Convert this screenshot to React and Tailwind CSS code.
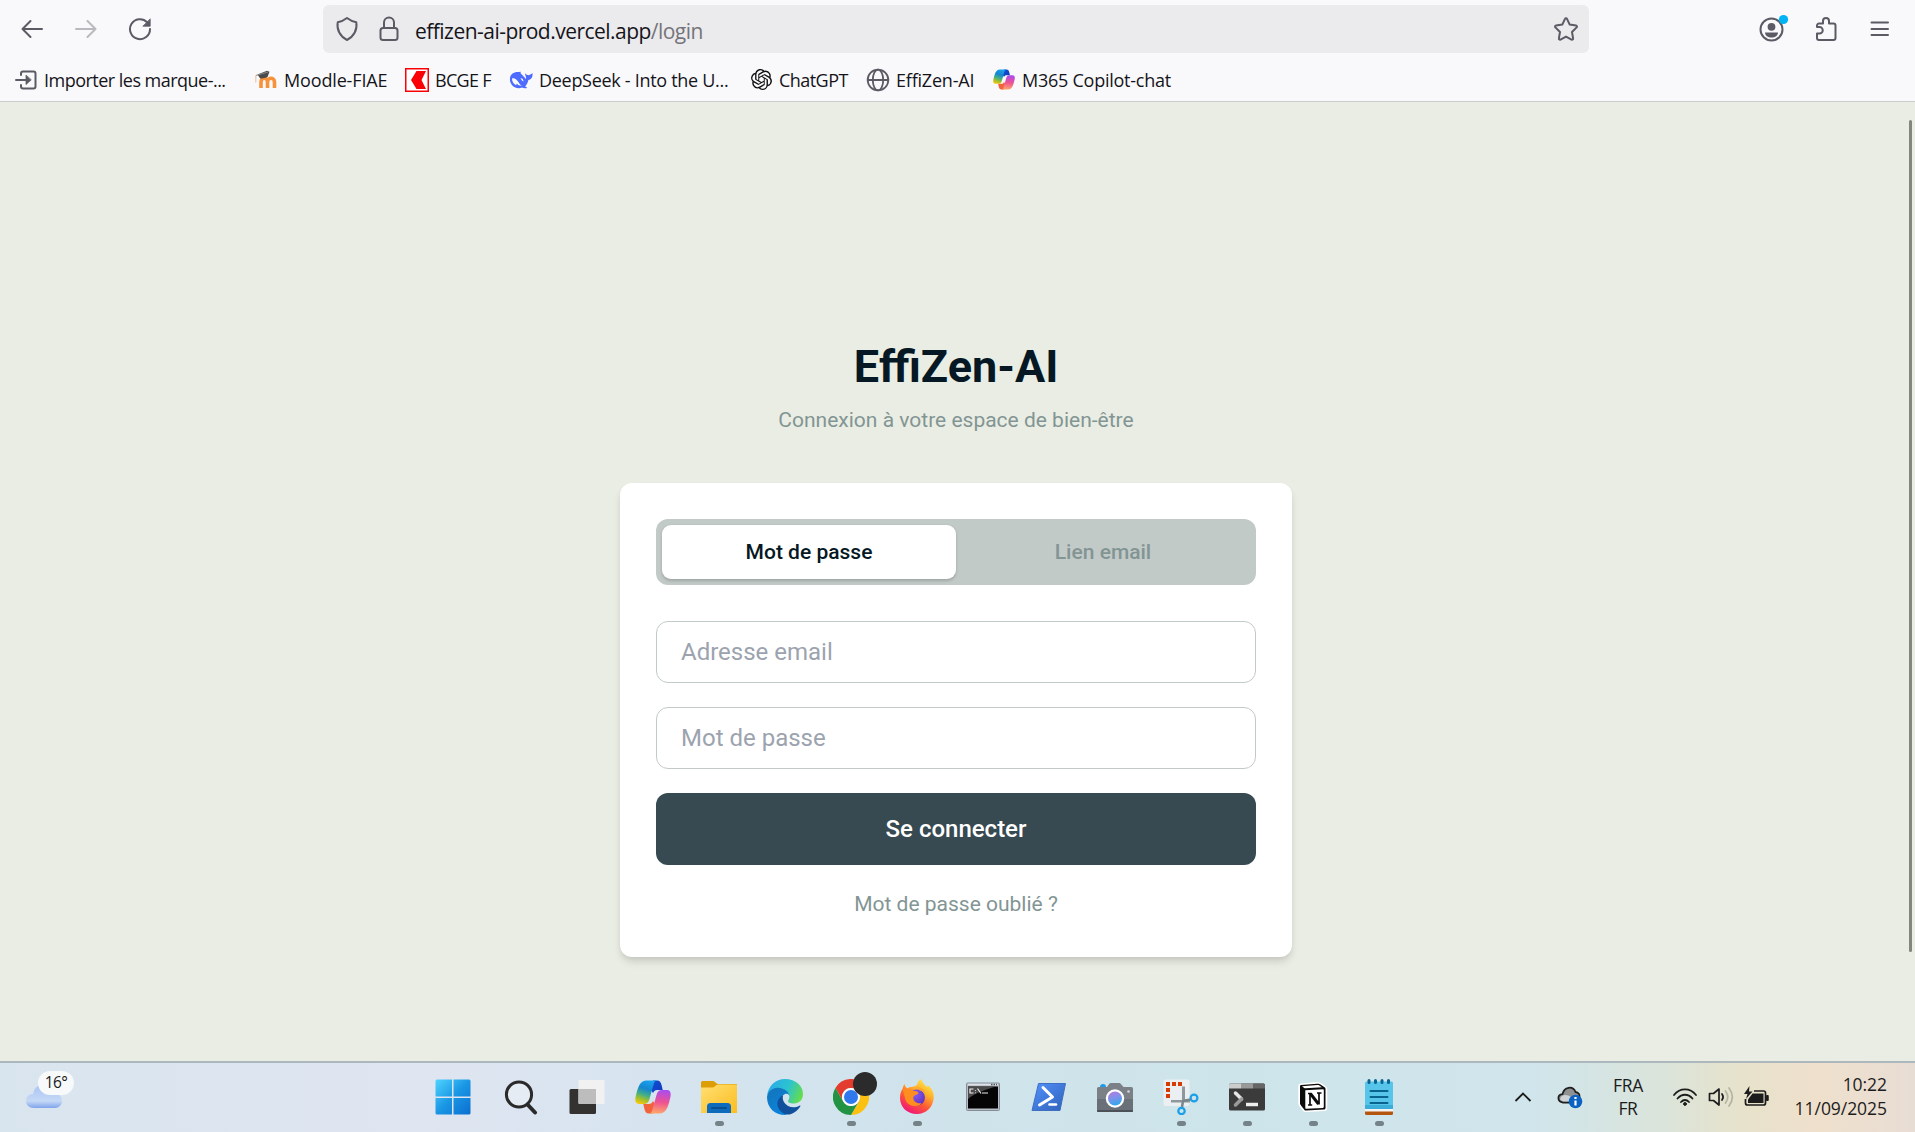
import React from 'react';
import { SiOpenai } from 'react-icons/si';

const stroke = { fill: 'none', stroke: '#5b5b66', strokeWidth: 2, strokeLinecap: 'round', strokeLinejoin: 'round' };

/* ---------- browser toolbar icons ---------- */

const ArrowLeft = ({ className }) => (
  <svg width="24" height="24" viewBox="0 0 24 24" className={className} {...stroke}>
    <path d="M22 12H2.5M10.5 4 2.5 12l8 8" />
  </svg>
);

const Reload = () => (
  <svg width="24" height="24" viewBox="0 0 24 24" {...stroke}>
    <path d="M19.2 5.2A10 10 0 1 0 22 12" />
    <path d="M22.2 2.2v7h-7z" fill="#5b5b66" strokeWidth="0.8" />
  </svg>
);

const Shield = () => (
  <svg width="24" height="26" viewBox="0 0 24 26" {...stroke}>
    <path d="M12 2c3 2.300 6.500 3.800 9.300 4.300C22.500 13.500 19 20.500 12 24 5 20.500 1.500 13.500 2.700 6.300 5.500 5.800 9 4.300 12 2z" />
  </svg>
);

const Lock = () => (
  <svg width="20" height="26" viewBox="0 0 20 26" {...stroke}>
    <rect x="1.500" y="12" width="17" height="12" rx="2.500" />
    <path d="M5 12V6.500a5 5 0 0 1 10 0V12" />
  </svg>
);

const Star = () => (
  <svg width="26" height="26" viewBox="0 0 26 26" {...stroke}>
    <path d="M12 2.800a1.100 1.100 0 0 1 2 0l2.700 5.800 6.300.9a1.100 1.100 0 0 1 .6 1.900L19 16l1.100 6.400a1.100 1.100 0 0 1-1.600 1.200L13 20.600l-5.500 3a1.100 1.100 0 0 1-1.600-1.200L7 16l-4.600-4.600A1.100 1.100 0 0 1 3 9.500l6.300-.9z" />
  </svg>
);

const Account = () => (
  <svg width="30" height="28" viewBox="0 0 30 28">
    <circle cx="12.500" cy="15.500" r="11" {...stroke} />
    <circle cx="12.500" cy="12.800" r="3.900" fill="#5b5b66" />
    <path d="M6 18.500h13c0 3-3 5-6.500 5S6 21.500 6 18.500z" fill="#5b5b66" />
    <circle cx="24.500" cy="5.500" r="4.600" fill="#00b3f4" />
  </svg>
);

const Puzzle = () => (
  <svg width="22" height="26" viewBox="0 0 22 26" {...stroke}>
    <path d="M2 10.500V9.500A2 2 0 0 1 4 7.500h4V5a3 3 0 0 1 6 0v2.500h4.500a2 2 0 0 1 2 2V22a2 2 0 0 1-2 2H4a2 2 0 0 1-2-2v-4.500h2.500a3 3 0 0 0 0-6.500H2z" />
  </svg>
);

const Menu = () => (
  <svg width="20" height="18" viewBox="0 0 20 18" {...stroke}>
    <path d="M1.500 2.500h16.500M1.500 9h16.500M1.500 15h16.500" />
  </svg>
);

/* ---------- bookmark icons ---------- */

const ImportIcon = () => (
  <svg width="24" height="22" viewBox="0 0 24 22" {...stroke}>
    <path d="M7 6V4.500a2 2 0 0 1 2-2h10.500a2 2 0 0 1 2 2v13a2 2 0 0 1-2 2H9a2 2 0 0 1-2-2V16M2 11h12" />
    <path d="M12 6.500v9l5-4.500z" fill="#5b5b66" strokeWidth="0.800" />
  </svg>
);

const Moodle = () => (
  <svg width="24" height="20" viewBox="0 0 24 20">
    <path d="M7 18v-6c0-5 6.500-5 6.500 0v6m0-6c0-5 7-5 7 0v6" fill="none" stroke="#f7923a" strokeWidth="3.600" />
    <path d="M3.500 4.500 13 .8l2.500 1-2 5.200c-2 1-5.500 1.800-7.500 1.200z" fill="#4a4a4a" />
    <path d="M1.800 5.500 14 2" stroke="#8a8a8a" strokeWidth="1" />
    <path d="M1.800 5.500v7" stroke="#f3c5a0" strokeWidth="1.200" />
  </svg>
);

const Bcge = () => (
  <svg width="24" height="24" viewBox="0 0 24 24">
    <rect x="0.750" y="0.750" width="22.500" height="22.500" fill="#fff" stroke="#fb0007" strokeWidth="1.500" />
    <path d="M11.500 3H21l-4.500 9 4.500 9h-9.500L6 12z" fill="#fb0007" />
  </svg>
);

const DeepSeek = () => (
  <svg width="24" height="18" viewBox="0 0 24 18">
    <path
      d="M1 7C1.500 3 5 .8 9 1c1 0 2-.6 2.500-.2.600.5-.3 1 .3 1.800 2 2 4 4 5 5.500 1-1.500-.8-3.500-.8-6 .8 1 1.300 1.700 2.600 2 1.700.2 3-.3 4.800-2 .7 4-1 6.300-4 7-.5 2.600-1.600 4.700-3.300 6.400 1 .4 1.700.7 1.900 1.500-2 .6-3.600.3-5-.4C6.500 18.800.2 14 1 7z"
      fill="#4d6bfe"
    />
    <path d="M3 7.500c2.500-.8 4.500.8 6 3 1.300 2 2 3.200 3.800 4.200-2 .3-3.600-.6-5-2.200l-.6 1.800C4.500 13 3 10.500 3 7.500z" fill="#f9f9fb" />
    <path d="M11.500 7.200c2-.3 3 1.300 3 3.200-1.300-.2-1.800-1.500-3-3.200z" fill="#f9f9fb" />
  </svg>
);

const Globe = () => (
  <svg width="24" height="24" viewBox="0 0 24 24" {...stroke} strokeWidth="1.800">
    <circle cx="12" cy="12" r="10.300" />
    <ellipse cx="12" cy="12" rx="5.200" ry="10.300" />
    <path d="M1.700 12h20.600" />
  </svg>
);

const Copilot = ({ id, width, height }) => (
  <svg width={width} height={height} viewBox="0 0 36 34">
    <defs>
      <linearGradient id={id + 'a'} x1="0.600" y1="0" x2="0.300" y2="1">
        <stop offset="0" stopColor="#1ba0ee" />
        <stop offset="0.350" stopColor="#1586cf" />
        <stop offset="0.600" stopColor="#3fae8c" />
        <stop offset="0.800" stopColor="#9cbf2f" />
        <stop offset="1" stopColor="#f5c60a" />
      </linearGradient>
      <linearGradient id={id + 'b'} x1="0.500" y1="0" x2="0.400" y2="1">
        <stop offset="0" stopColor="#a94df0" />
        <stop offset="0.500" stopColor="#ee5193" />
        <stop offset="1" stopColor="#ffa66a" />
      </linearGradient>
      <linearGradient id={id + 'c'} x1="0" y1="0" x2="1" y2="1">
        <stop offset="0" stopColor="#0f52cf" />
        <stop offset="1" stopColor="#1436c2" />
      </linearGradient>
    </defs>
    <path d="M18 .5h4c3 0 4 2 4.700 5l1 4.500H22c-2 0-3 1-4 3l-2-3z" fill={'url(#' + id + 'c)'} />
    <path d="M18 33.500h-4c-3 0-4-2-4.700-5l-1-4.500H14c2 0 3-1 4-3l2 3z" fill="#f2633c" />
    <path d="M11 .5h11c-2 0-3 2-3.600 4.500L14.500 19c-.9 3.500-2.500 5-5.500 5H4c-4 0-4.200-4-3.200-8C2 11 4 .5 11 .5z" fill={'url(#' + id + 'a)'} />
    <path d="M25 33.500H14c2 0 3-2 3.600-4.500L21.500 15c.9-3.500 2.500-5 5.500-5h5c4 0 4.200 4 3.200 8-1.200 5-3.200 15.500-10.200 15.500z" fill={'url(#' + id + 'b)'} />
  </svg>
);

/* ---------- taskbar icons ---------- */

const Windows = () => (
  <svg width="36" height="36" viewBox="0 0 36 36">
    <defs>
      <linearGradient id="win" x1="0" y1="0" x2="1" y2="1">
        <stop offset="0" stopColor="#4fd4ff" />
        <stop offset="0.500" stopColor="#1a96e4" />
        <stop offset="1" stopColor="#0a6fd0" />
      </linearGradient>
    </defs>
    <path d="M2 .5h15v17H.5V2A1.500 1.500 0 0 1 2 .5zM18.500.5H34A1.500 1.500 0 0 1 35.500 2v15.500h-17zM.5 19H17v16.500H2A1.500 1.500 0 0 1 .5 34zM18.500 19h17v15a1.500 1.500 0 0 1-1.500 1.500H18.500z" fill="url(#win)" />
  </svg>
);

const Search = () => (
  <svg width="34" height="36" viewBox="0 0 34 36" fill="none" stroke="#2a2a2a" strokeLinecap="round">
    <circle cx="15" cy="15.500" r="12.600" strokeWidth="3" fill="#e6ecf3" />
    <path d="m24 26 7 7.500" strokeWidth="4" />
  </svg>
);

const TaskView = () => (
  <svg width="36" height="36" viewBox="0 0 36 36">
    <rect x="0.500" y="10" width="26.500" height="25" rx="1.500" fill="#333230" />
    <rect x="9.500" y="1" width="26" height="24" rx="1" fill="#f1f1f1" />
    <path d="M9.500 10H27v15H10.500a1 1 0 0 1-1-1z" fill="#bdbdbd" />
  </svg>
);

const Folder = () => (
  <svg width="36" height="36" viewBox="0 0 36 36">
    <defs>
      <linearGradient id="fold" x1="0" y1="0" x2="1" y2="1">
        <stop offset="0" stopColor="#ffdf73" />
        <stop offset="1" stopColor="#fcbd1f" />
      </linearGradient>
    </defs>
    <path d="M0 3.500A1.500 1.500 0 0 1 1.500 2H12c2 0 3 3 5 3h18a1 1 0 0 1 1 1v10H0z" fill="#dd9d05" />
    <path d="M0 8.500h11.500c2.500 0 3-3 5.500-3h18a1 1 0 0 1 1 1V34H0z" fill="url(#fold)" />
    <path d="M6 34v-6.500a3.500 3.500 0 0 1 3.500-3.500h17a3.500 3.500 0 0 1 3.500 3.500V34z" fill="#0f6cbd" />
    <path d="M11 29h14" stroke="#0a4f91" strokeWidth="2" strokeLinecap="round" />
  </svg>
);

const Edge = () => (
  <svg width="36" height="36" viewBox="0 0 36 36">
    <defs>
      <linearGradient id="edA" x1="0" y1="0.300" x2="1" y2="0.600">
        <stop offset="0" stopColor="#2aabea" />
        <stop offset="0.550" stopColor="#2cc3cf" />
        <stop offset="1" stopColor="#66dd4a" />
      </linearGradient>
      <linearGradient id="edB" x1="0" y1="0" x2="0.500" y2="1">
        <stop offset="0" stopColor="#1474b8" />
        <stop offset="1" stopColor="#0a83dc" />
      </linearGradient>
    </defs>
    <path d="M0 17C1 7 8.500 0 18 0c11 0 18 7 18 15 0 6-4 9.500-9 9.500-4.500 0-7-1.500-5.500-3.500 2-3 .5-8-4-10C11 8 3 10 0 17z" fill="url(#edA)" />
    <path d="M0 18C1 12 6 8.500 11 8.800c6.500.4 11.500 4.500 11.300 8.200-.3-2.500-4.300-3-6.300-.5-4 5-.5 13 5 17-1.500 2-3 2.500-3 2.500C8 36 0 29 0 18z" fill="url(#edB)" />
    <path d="M16 16.500c-7 3-7.500 11.500-1.500 16.500 3 2.500 6.500 3 9 2.200 4-1.200 7.500-4 9.800-7.700.4-.8-.2-1.200-.8-.8C23 31.500 14 24 16 16.500z" fill="#104f9c" />
  </svg>
);

const Chrome = () => (
  <svg width="36" height="36" viewBox="0 0 36 36">
    <path d="M2.400 9A18 18 0 0 1 33.600 9H18a9 9 0 0 0-7.800 13.500z" fill="#e33b2e" />
    <path d="M33.600 9A18 18 0 0 1 18 36l7.800-13.500A9 9 0 0 0 18 9z" fill="#fcc110" />
    <path d="M18 36A18 18 0 0 1 2.400 9l7.800 13.500a9 9 0 0 0 15.600 0z" fill="#229342" />
    <circle cx="18" cy="18" r="9" fill="#fff" />
    <circle cx="18" cy="18" r="7" fill="#2f78ee" />
  </svg>
);

const Firefox = () => (
  <svg width="36" height="36" viewBox="0 0 36 36">
    <defs>
      <linearGradient id="ffA" x1="0.850" y1="0" x2="0.300" y2="1">
        <stop offset="0" stopColor="#fff04e" />
        <stop offset="0.350" stopColor="#ffb32a" />
        <stop offset="0.650" stopColor="#ff5a34" />
        <stop offset="1" stopColor="#f0127c" />
      </linearGradient>
      <radialGradient id="ffB" cx="0.400" cy="0.300" r="0.800">
        <stop offset="0" stopColor="#8a5cf5" />
        <stop offset="1" stopColor="#5a2fb4" />
      </radialGradient>
    </defs>
    <path d="M5.500 5c.5 2 1.500 3.500 3 4.500C10 8 11 8 13 8c3-1 5-2 5-2 .5-3 2-5 4.500-6 .5 4 3.500 6 6 8.500 0-1 0-1.500-.2-2.500C34 10 35 15 34.700 19 34 28.500 27 35 18 35 8 35 1 28 1 19c0-4 1-7 2.500-9C4 8 4.500 6.500 5.500 5z" fill="url(#ffA)" />
    <circle cx="18" cy="18.500" r="8" fill="url(#ffB)" />
    <path d="M4 11c3-2 7-1.500 10 1 2.500 0 5 .3 5.500 2-.5 2-4.500 1.500-5 4-1 4 4 7.500 8 6-2 4.500-13 4.500-16-3z" fill="#ff8e20" />
    <path d="M18 8c4 0 7 2.500 8.500 6-2-1.500-4-2.300-6-2.500z" fill="#ffa42c" />
  </svg>
);

const Cmd = () => (
  <svg width="36" height="30" viewBox="0 0 36 30">
    <rect x="1.500" y="1" width="33" height="27.500" rx="1" fill="#b9bfc7" stroke="#868d96" />
    <path d="M3 2.500h30" stroke="#dfe3e8" strokeWidth="1.500" />
    <path d="M26 2.500h6" stroke="#4d5560" strokeWidth="1.500" strokeDasharray="1.500 1" />
    <rect x="3" y="4.500" width="30" height="22" fill="#050505" />
    <path d="M3 4.500h28C22 7 10 11 3 17z" fill="#4a4a4a" />
    <path d="M8.500 7H5v4h3.500M10.500 8v.8M10.500 10.500v.8M12.500 6.500l3.500 5M17 11h6" fill="none" stroke="#eee" strokeWidth="1.200" />
  </svg>
);

const PowerShell = () => (
  <svg width="36" height="30" viewBox="0 0 36 30">
    <defs>
      <linearGradient id="ps" x1="0" y1="0" x2="1" y2="1">
        <stop offset="0" stopColor="#5391fe" />
        <stop offset="1" stopColor="#2e62b8" />
      </linearGradient>
    </defs>
    <path d="M7.500 1.500h27L29 28.500H1z" fill="url(#ps)" strokeLinejoin="round" stroke="#3e6fc0" />
    <path d="m12 5.500 9.500 9.500L8.500 23" fill="none" stroke="#fff" strokeWidth="3" strokeLinecap="round" strokeLinejoin="round" />
    <path d="M18.500 22.500h6.500" stroke="#fff" strokeWidth="2.600" strokeLinecap="round" />
  </svg>
);

const Camera = () => (
  <svg width="36" height="32" viewBox="0 0 36 32">
    <defs>
      <linearGradient id="cam" x1="0.200" y1="0" x2="0.500" y2="1">
        <stop offset="0" stopColor="#b57ae0" />
        <stop offset="0.500" stopColor="#7c94ea" />
        <stop offset="1" stopColor="#2ea8ef" />
      </linearGradient>
    </defs>
    <path d="M3 6a3 3 0 0 1 6 0z" fill="#1e9be8" />
    <path d="M1.500 6H10l2.500-3.500A2 2 0 0 1 14 2h8a2 2 0 0 1 1.700.7L26.500 6h8A1.500 1.500 0 0 1 36 7.500V29H0V7.500A1.500 1.500 0 0 1 1.500 6z" fill="#7a8086" />
    <path d="M0 18h36v12a1 1 0 0 1-1 1H1a1 1 0 0 1-1-1z" fill="#6a7077" />
    <path d="M0 29h36v1a1 1 0 0 1-1 1H1a1 1 0 0 1-1-1z" fill="#4b5157" />
    <circle cx="18" cy="17.500" r="9.200" fill="#fff" />
    <circle cx="18" cy="17.500" r="7" fill="url(#cam)" />
    <circle cx="31.500" cy="10.500" r="1.300" fill="#d5d8db" />
  </svg>
);

const Snip = () => (
  <svg width="36" height="36" viewBox="0 0 36 36">
    <rect x="0.500" y="0.500" width="26" height="26.500" rx="2" fill="#eceff1" />
    <path d="M19 7.500h3v13h5v3H8v-2.500h11z" fill="#8e979c" />
    <path d="M3 5h17M5 3v17" stroke="#d83b01" strokeWidth="4" strokeDasharray="4 2" />
    <circle cx="31" cy="19" r="3.400" fill="none" stroke="#1a9fe8" strokeWidth="2.200" />
    <circle cx="18.500" cy="32" r="3.200" fill="none" stroke="#1a9fe8" strokeWidth="2.200" />
    <path d="M27.500 20.500 20 22l-1 6" fill="none" stroke="#79858b" strokeWidth="2.500" />
  </svg>
);

const Terminal = () => (
  <svg width="36" height="30" viewBox="0 0 36 30">
    <rect y="1.500" width="36" height="27" rx="1.500" fill="#3b3b3b" />
    <path d="M1.500 1.500H12V6.500H0V3a1.500 1.500 0 0 1 1.500-1.500z" fill="#ccc" />
    <path d="M12 1.500h12v5H12z" fill="#999" />
    <path d="M24 1.500h10.500A1.500 1.500 0 0 1 36 3v3.500H24z" fill="#666" />
    <path d="m6.500 11 6 6" stroke="#e6e6e6" strokeWidth="3.500" strokeLinecap="round" />
    <path d="m12.500 17-6 6" stroke="#9a9a9a" strokeWidth="3.500" strokeLinecap="round" />
    <path d="M17 22.500h12" stroke="#eee" strokeWidth="3.500" />
  </svg>
);

const Notion = () => (
  <svg width="30" height="32" viewBox="0 0 30 32">
    <path d="m2 3.500 17-1.700c2-.2 2.500 0 4 1l4 3c1 .6 1.500 1 1.500 2.200v19c0 1.300-.5 2-2 2.200l-18.500 1c-1.200.1-1.800-.2-2.500-1L1.800 24.500C1.200 23.800 1 23.300 1 22.300V5c0-.8.300-1.400 1-1.500z" fill="#fff" stroke="#fff" strokeWidth="1.500" />
    <path d="m3 4 16-1.300c1.800-.1 2.300 0 3.500.8l4 2.800c.8.500 1 .8 1 1.600v18.800c0 1.200-.4 1.800-1.700 1.900l-17.500 1c-1 0-1.500-.2-2-.9L2.600 24c-.4-.7-.6-1.200-.6-1.800V5.500C2 4.600 2.400 4 3 4z" fill="#0b0b0b" />
    <path d="M7.300 9.200 25 8.200c.5 0 .8.300.8.800v16.700c0 .7-.3 1.100-.9 1.200l-16.600.9c-.6 0-1-.3-1-.9z" fill="#fff" />
    <path d="M4 5.200 19.500 4c.8 0 1.200 0 1.800.4l2.600 1.800L7.500 7.300c-.6 0-.9 0-1.300-.4z" fill="#fff" />
    <path d="M10 12.500h3.500M12 13v11M10 24h4.200M21 12v11.500M19 12h4.500" fill="none" stroke="#0b0b0b" strokeWidth="1.700" />
    <path d="M12.500 12.800 20.500 23" stroke="#0b0b0b" strokeWidth="3" />
  </svg>
);

const Notepad = () => (
  <svg width="30" height="38" viewBox="0 0 30 38">
    <rect x="1" y="30" width="28" height="7" rx="1.500" fill="#b4560f" />
    <rect x="1" y="28" width="28" height="5.500" fill="#f3f3f3" />
    <path d="M2.500 3.500h25A1.500 1.500 0 0 1 29 5v26H1V5a1.500 1.500 0 0 1 1.500-1.500z" fill="#57c5ea" />
    <path d="M1 27h28v4H1z" fill="#3aaed8" />
    <path d="M6.500 13h17M6.500 19h17M6.500 25h17" stroke="#08648f" strokeWidth="2" strokeLinecap="round" />
    <path d="M5 2.500v2M11.500 2.500v2M18 2.500v2M24.500 2.500v2" stroke="#08648f" strokeWidth="3" strokeLinecap="round" />
  </svg>
);

const WeatherCloud = () => (
  <svg width="38" height="26" viewBox="0 0 38 26">
    <defs>
      <linearGradient id="cl" x1="0" y1="0" x2="0" y2="1">
        <stop offset="0" stopColor="#a9c3f4" />
        <stop offset="0.700" stopColor="#c5d9f6" />
        <stop offset="1" stopColor="#7fa3ec" />
      </linearGradient>
    </defs>
    <path d="M8 10C9 4 13 1 18 1c6 0 9 4 9.500 9 5-1 9.500 2 9.500 7 0 4-3 7-7 7H9c-5 0-8-3-8-7s3-7 7-7z" fill="url(#cl)" />
  </svg>
);

const Chevron = () => (
  <svg width="18" height="12" viewBox="0 0 18 12" fill="none" stroke="#1c1c1c" strokeWidth="1.800">
    <path d="m1.500 10 7.500-7.500 7.500 7.500" />
  </svg>
);

const OneDrive = () => (
  <svg width="26" height="24" viewBox="0 0 26 24">
    <path d="M6 17.500c-6-.5-6-8-.5-8.300C7 1.500 16 .5 18.500 7c3 .3 4.500 2.500 4 5.500L13 17.500z" fill="#8f9193" stroke="#1f1f1f" strokeWidth="1.800" />
    <path d="M3 14.500c1-5 6-6 12-2l-3 4H6z" fill="#cfd3d5" />
    <circle cx="18.500" cy="16.500" r="6.800" fill="#0a63c2" />
    <path d="M18.500 15.500v5M18.500 12v2" stroke="#fff" strokeWidth="2.200" />
  </svg>
);

const Wifi = () => (
  <svg width="26" height="20" viewBox="0 0 26 20" fill="none" stroke="#1c1c1c" strokeWidth="1.800" strokeLinecap="round">
    <path d="M2 8c6-7.500 16-7.500 22 0M5.500 11.500c4.500-5 10.500-5 15 0M9 15c2.500-2.700 5.500-2.700 8 0" />
    <circle cx="13" cy="17" r="1.400" fill="#1c1c1c" strokeWidth="1" />
  </svg>
);

const Volume = () => (
  <svg width="26" height="22" viewBox="0 0 26 22" fill="none" stroke="#1c1c1c" strokeWidth="1.700" strokeLinecap="round" strokeLinejoin="round">
    <path d="M1.500 7.500v7h4L11 19V3L5.500 7.500z" />
    <path d="M14 8c1.500 2 1.500 4 0 6" />
    <path d="M17.500 5c3 4 3 8 0 12M21 2c4.500 6 4.500 12 0 18" stroke="#b4b4a4" />
  </svg>
);

const Battery = () => (
  <svg width="26" height="22" viewBox="0 0 26 22">
    <path d="M10 5h9.500a2 2 0 0 1 2 2v10a2 2 0 0 1-2 2H3.500a2 2 0 0 1-2-2v-4" fill="none" stroke="#1c1c1c" strokeWidth="1.700" />
    <path d="M8.500 7.500H19.500V17H4v-3.500z" fill="#1c1c1c" />
    <path d="M22.500 9.500h1.700v5h-1.700z" fill="#1c1c1c" stroke="#1c1c1c" />
    <path d="M5.500 0 0 8h3.500L2 13l6.500-7.500H5z" fill="#1c1c1c" />
  </svg>
);

/* ---------- sections ---------- */

const bookmarks = [
  { label: 'Importer les marque-...', icon: <ImportIcon />, box: 'w-[240px]', track: 'tracking-[-0.52px]' },
  { label: 'Moodle-FIAE', icon: <Moodle />, box: 'w-[151px]', track: 'tracking-[-0.15px]' },
  { label: 'BCGE F', icon: <Bcge />, box: 'w-[104px]', track: 'tracking-[-0.7px]' },
  { label: 'DeepSeek - Into the U...', icon: <DeepSeek />, box: 'w-[240px]', track: 'tracking-[-0.3px]' },
  { label: 'ChatGPT', icon: <SiOpenai size={21} color="#111" />, box: 'w-[117px]', track: 'tracking-[-0.55px]' },
  { label: 'EffiZen-AI', icon: <Globe />, box: 'w-[126px]', track: 'tracking-[-0.2px]' },
  { label: 'M365 Copilot-chat', icon: <Copilot id="bm" width={22} height={21} />, box: 'w-[200px]', track: 'tracking-[-0.25px]' },
];

const Browser = () => (
  <header className="h-[102px] border-b border-[#cccccd] bg-[#f9f9fb]">
    <div className="flex h-[58px] items-center pl-5">
      <div className="flex w-[303px] items-center gap-[30px]">
        <ArrowLeft />
        <ArrowLeft className="rotate-180 opacity-40" />
        <Reload />
      </div>
      <div className="flex h-12 w-[1266px] items-center rounded-md bg-[#ebebed] pr-[10px] pl-3">
        <Shield />
        <div className="ml-5 flex">
          <Lock />
        </div>
        <div className="ml-[16px] flex-1 pt-[3px] font-['Open_Sans',sans-serif] text-[21px] leading-7 tracking-[-0.53px] whitespace-nowrap text-[#15141a]">
          effizen-ai-prod.vercel.app<span className="text-[#75747a]">/login</span>
        </div>
        <Star />
      </div>
      <div className="flex flex-1 items-center pl-[170px]">
        <div className="-mt-[3px]">
          <Account />
        </div>
        <div className="ml-[26px]">
          <Puzzle />
        </div>
        <div className="ml-[33px]">
          <Menu />
        </div>
      </div>
    </div>
    <nav className="flex h-[43px] items-center pl-[14px] font-['Open_Sans',sans-serif] text-[18px] leading-6 text-[#15141a]">
      {bookmarks.map((b) => (
        <div key={b.label} className={b.box + ' flex shrink-0 items-center gap-[6px]'}>
          <span className="flex w-6 shrink-0 justify-center">{b.icon}</span>
          <span className={b.track + ' pt-[1px] whitespace-nowrap'}>{b.label}</span>
        </div>
      ))}
    </nav>
  </header>
);

const Login = () => (
  <main className="flex flex-1 justify-between bg-[#eaede3] pl-[620px] font-[Roboto,sans-serif]">
    <div className="w-[672px] pt-[238px]">
      <h1 className="text-center text-[45px] leading-[54px] font-bold text-[#051824]">EffiZen-AI</h1>
      <p className="mt-[11px] text-center text-[21px] leading-[30px] text-[#829594]">Connexion à votre espace de bien-être</p>
      <section className="mt-12 h-[474px] rounded-xl bg-white p-9 shadow-[0_6px_9px_-1px_rgba(0,0,0,0.1),0_3px_6px_-2px_rgba(0,0,0,0.1)]">
        <div className="flex h-[66px] rounded-xl bg-[#c2cac7] p-[6px] text-[21px] font-medium">
          <button className="flex-1 rounded-[9px] bg-white pt-[2px] text-[#051824] shadow-[0_1.5px_3px_rgba(0,0,0,0.18)]">Mot de passe</button>
          <button className="flex-1 pt-[2px] text-[#829594]">Lien email</button>
        </div>
        <div className="mt-9 flex h-[62px] items-center rounded-xl border border-[#c2cac7] px-6 text-[24px] text-[#9ca3af]">Adresse email</div>
        <div className="mt-6 flex h-[62px] items-center rounded-xl border border-[#c2cac7] px-6 text-[24px] text-[#9ca3af]">Mot de passe</div>
        <button className="mt-6 h-[72px] w-full rounded-xl bg-[#374951] text-[24px] font-medium text-white">Se connecter</button>
        <p className="mt-6 text-center text-[21px] leading-[30px] text-[#829594]">Mot de passe oublié ?</p>
      </section>
    </div>
    <div className="mt-[18px] mr-[3px] h-[832px] w-[3px] rounded-full bg-[#83857f]" />
  </main>
);

const apps = [
  { name: 'start', icon: <Windows /> },
  { name: 'search', icon: <Search /> },
  { name: 'taskview', icon: <TaskView /> },
  { name: 'copilot', icon: <Copilot id="tb" width={36} height={34} /> },
  { name: 'files', icon: <Folder />, open: true },
  { name: 'edge', icon: <Edge /> },
  { name: 'chrome', icon: <Chrome />, open: true, badge: true },
  { name: 'firefox', icon: <Firefox />, open: true },
  { name: 'cmd', icon: <Cmd /> },
  { name: 'powershell', icon: <PowerShell /> },
  { name: 'camera', icon: <Camera /> },
  { name: 'snip', icon: <Snip />, open: true },
  { name: 'terminal', icon: <Terminal />, open: true },
  { name: 'notion', icon: <Notion />, open: true },
  { name: 'notepad', icon: <Notepad />, open: true },
];

const Taskbar = () => (
  <footer className="flex h-[71px] border-t-2 border-[#adb8be] bg-[linear-gradient(90deg,#d9e5ee_0%,#dfe5f1_22%,#d5e4ef_36%,#cfe3eb_50%,#cde5ea_65%,#d0e5ec_80%,#dbe4da_87%,#e7e2cb_91%,#efe0cc_95%,#e8ddd5_100%)] font-['Open_Sans',sans-serif] text-[#1c1c1c]">
    <div className="w-[420px] pl-[25px]">
      <div className="relative flex h-full w-[60px] items-start pt-[21px]">
        <WeatherCloud />
        <span className="absolute top-[8px] left-[13px] flex h-6 w-9 items-center justify-center rounded-full bg-[#f7f9fb] text-[15.5px] tracking-[-0.6px]">16°</span>
      </div>
    </div>
    <div className="flex w-[990px]">
      {apps.map((a) => (
        <div key={a.name} className="flex w-[66px] flex-col items-center pt-[14px] not-first:pl-[4px]">
          <div className="relative flex h-10 items-center justify-center">
            {a.icon}
            {a.badge && <span className="absolute -top-[5px] left-5 size-6 rounded-full bg-[#2b2b2b]" />}
          </div>
          {a.open && <span className="mt-1 h-[5px] w-[9px] rounded-full bg-[#758388]" />}
        </div>
      ))}
    </div>
    <div className="flex h-[68px] flex-1 items-center pl-[104px]">
      <Chevron />
      <div className="ml-[25px]">
        <OneDrive />
      </div>
      <div className="ml-[24px] w-[42px] text-center text-[17.5px] leading-[23px] tracking-[-0.3px]">
        <div>FRA</div>
        <div>FR</div>
      </div>
      <div className="ml-[23px]">
        <Wifi />
      </div>
      <div className="ml-[10px]">
        <Volume />
      </div>
      <div className="ml-[10px]">
        <Battery />
      </div>
      <div className="flex-1 pr-[28px] pb-[2px] text-right text-[17.5px] leading-6 tracking-[-0.05px]">
        <div>10:22</div>
        <div>11/09/2025</div>
      </div>
    </div>
  </footer>
);

export default function App() {
  return (
    <div className="flex h-[1132px] w-[1915px] flex-col overflow-hidden">
      <Browser />
      <Login />
      <Taskbar />
    </div>
  );
}
